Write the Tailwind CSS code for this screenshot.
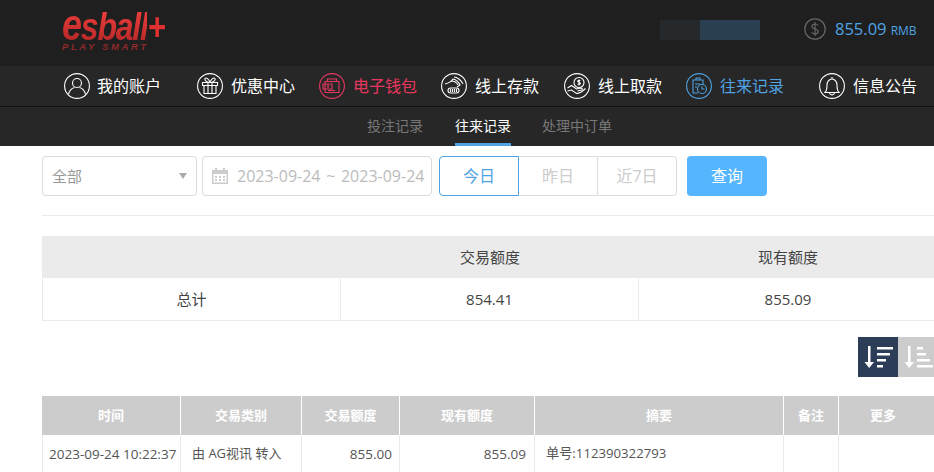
<!DOCTYPE html>
<html lang="en">
<head>
    <meta charset="UTF-8">
    <title>esball+ 往来记录</title>
    <script src="https://cdn.jsdelivr.net/npm/@tailwindcss/browser@4"></script>
</head>
<body class="bg-white h-[472px] w-[934px] overflow-hidden font-['Open_Sans','Noto_Sans_CJK_SC',sans-serif] text-[#555]">
    <!-- top bar -->
    <header class="h-[66px] bg-[#1f1f1f] flex items-start">
        <div class="ml-[62px] mt-[9px] w-[110px] h-[50px] flex flex-col font-['Liberation_Sans',sans-serif] italic font-bold">
            <div class="flex items-baseline h-[32px] leading-[32px] tracking-[-1.5px] scale-x-[0.82] origin-left whitespace-nowrap">
                <span class="text-[44px] bg-linear-to-b from-[#ee3d3d] to-[#b82828] bg-clip-text text-transparent">e</span>
                <span class="text-[39px] bg-linear-to-b from-[#ee3d3d] to-[#b82828] bg-clip-text text-transparent">sball</span>
                <span class="text-[38px] text-[#e03030]">+</span>
            </div>
            <div class="text-[9.500px] leading-[10px] tracking-[2.600px] text-[#8f2a2a] mt-[1px] whitespace-nowrap">PLAY SMART</div>
        </div>
        <div class="ml-[488px] mt-[20px] flex h-[20px] w-[100px]">
            <div class="w-[40px] bg-[#25292c]"></div>
            <div class="w-[60px] bg-[#2a3f52]"></div>
        </div>
        <svg class="ml-[44px] mt-[18px]" width="22" height="22" viewBox="0 0 22 22" fill="none" stroke="#666" stroke-width="1.2">
            <circle cx="11" cy="11" r="10.200"/>
            <path d="M14 7.500c-.6-1-1.700-1.500-3-1.500-1.700 0-3 .9-3 2.400 0 3.400 6.200 1.800 6.200 5.200 0 1.500-1.400 2.400-3.200 2.400-1.400 0-2.600-.6-3.200-1.700M11 4v14"/>
        </svg>
        <div class="ml-[9px] mt-[17px] h-[24px] leading-[24px] whitespace-nowrap text-[#4fa3e3]">
            <span class="text-[16.500px]">855.09</span>
            <span class="text-[12px]">RMB</span>
        </div>
    </header>

    <!-- main nav -->
    <nav class="h-[41px] bg-[#272727] border-b border-[#111] flex items-center pl-[64px] gap-[24px] text-[16px] text-white">
        <a class="flex items-center gap-[7px] whitespace-nowrap">
            <svg width="26" height="26" viewBox="0 0 26 26" fill="none" stroke="currentColor" stroke-width="1.100">
                <circle cx="13" cy="13" r="12.400"/>
                <circle cx="13" cy="10" r="4.500"/>
                <path d="M4.500 21.500c1-4.500 4-6.500 6-7M21.500 21.500c-1-4.500-4-6.500-6-7"/>
            </svg>
            <span>我的账户</span>
        </a>
        <a class="ml-[12px] flex items-center gap-[8px] whitespace-nowrap">
            <svg width="26" height="26" viewBox="0 0 26 26" fill="none" stroke="currentColor" stroke-width="1.100">
                <circle cx="13" cy="13" r="12.400"/>
                <path d="M5.500 9.500h15v3h-15zM7 12.500v8h12v-8M11 9.500v11M15 9.500v11M13 9.500c-1-3.500-4-5.500-5-4S10 9.500 13 9.500c3 0 6-2.500 5-4S14 6 13 9.500"/>
            </svg>
            <span>优惠中心</span>
        </a>
        <a class="flex items-center gap-[8px] whitespace-nowrap text-[#e8375f]">
            <svg width="26" height="26" viewBox="0 0 26 26" fill="none" stroke="currentColor" stroke-width="1.100">
                <circle cx="13" cy="13" r="12.400"/>
                <path d="M6 8.500h14v11H6zM8.500 8.500v-2.500h9v2.500M4 11h9v5H4zM9 17.500h7"/>
                <path d="M9 12v3M8 13h2"/>
            </svg>
            <span>电子钱包</span>
        </a>
        <a class="flex items-center gap-[8px] whitespace-nowrap">
            <svg width="26" height="26" viewBox="0 0 26 26" fill="none" stroke="currentColor" stroke-width="1.100">
                <circle cx="13" cy="13" r="12.400"/>
                <path d="M4 11c4-1 6-2 8-5 2 0 6 3 7 6l-3 2M10 8c3 0 6 2 7 4M13 4c3 0 7 3 9 7"/>
                <rect x="7" y="15" width="11" height="5" rx="2.500"/>
                <path d="M9.500 16v3M11.500 16v3M13.500 16v3M15.500 16v3"/>
            </svg>
            <span>线上存款</span>
        </a>
        <a class="ml-[1px] flex items-center gap-[8px] whitespace-nowrap">
            <svg width="26" height="26" viewBox="0 0 26 26" fill="none" stroke="currentColor" stroke-width="1.100">
                <circle cx="13" cy="13" r="12.400"/>
                <circle cx="15" cy="9.500" r="5"/>
                <path d="M15 6.500v6M16.300 7.800c-.8-.8-2.600-.6-2.600.5s2.700.8 2.700 2-1.900 1.400-2.800.5"/>
                <path d="M3.500 15l4-2.500 5 3.500 5-1c1 0 1 1.500 0 2l-4 1M3.500 18l4-1 5 3.500c2 0 6-2 9-5"/>
            </svg>
            <span>线上取款</span>
        </a>
        <a class="flex items-center gap-[8px] whitespace-nowrap text-[#4fa3e3]">
            <svg width="26" height="26" viewBox="0 0 26 26" fill="none" stroke="currentColor" stroke-width="1.100">
                <circle cx="13" cy="13" r="12.400"/>
                <path d="M12 20H7V7h3V5h4v2h3v4M10 7h4M9 11h5M9 14h2"/>
                <circle cx="16" cy="16" r="4.500"/>
                <path d="M16 13.500V16h2.500"/>
            </svg>
            <span>往来记录</span>
        </a>
        <a class="ml-[11px] flex items-center gap-[8px] whitespace-nowrap">
            <svg width="26" height="26" viewBox="0 0 26 26" fill="none" stroke="currentColor" stroke-width="1.100">
                <circle cx="13" cy="13" r="12.400"/>
                <path d="M6 19.500c2-2 2-4 2-7.500 0-3 2-6 5-6s5 3 5 6c0 3.500 0 5.500 2 7.500zM13 4v2M10.500 20c.5 2.500 4.500 2.500 5 0"/>
            </svg>
            <span>信息公告</span>
        </a>
    </nav>

    <!-- sub nav -->
    <div class="h-[39px] bg-[#272727] flex pl-[367px] gap-[32px] text-[14px] text-[#777]">
        <a class="h-[39px] leading-[38px]">投注记录</a>
        <a class="h-[39px] leading-[38px] text-white border-b-[3px] border-[#4fa3e3]">往来记录</a>
        <a class="h-[39px] leading-[38px] -ml-[1px]">处理中订单</a>
    </div>

    <main class="pl-[42px]">
        <!-- filters -->
        <div class="pt-[10px] pb-[19px] border-b border-[#ebebeb] flex items-start text-[16px] text-[#bbb]">
            <div class="w-[155px] h-[40px] border border-[#dcdcdc] rounded-[4px] flex items-center justify-between pl-[9px] pr-[9px] text-[#999] text-[15px]">
                <span>全部</span>
                <span class="w-0 h-0 border-x-[4px] border-x-transparent border-t-[6px] border-t-[#aaa]"></span>
            </div>
            <div class="ml-[5px] w-[230px] h-[40px] border border-[#dcdcdc] rounded-[4px] flex items-center pl-[9px] whitespace-nowrap">
                <svg width="16" height="16" viewBox="0 0 16 16" fill="#ccc">
                    <path d="M0 2h3V0h2v2h6V0h2v2h3v14H0zM1.500 6v8.500h13V6z"/>
                    <path d="M3 8h2v2H3zM7 8h2v2H7zM11 8h2v2h-2zM3 11h2v2H3zM7 11h2v2H7zM11 11h2v2h-2z"/>
                </svg>
                <span class="ml-[9px]">2023-09-24 <span class="mx-[1.500px]">~</span> 2023-09-24</span>
            </div>
            <div class="ml-[7px] w-[238px] h-[40px] flex text-[16px] text-[#ccc]">
                <button class="w-[80px] border border-[#4fa3e3] rounded-l-[4px] text-[#4fa3e3]">今日</button>
                <button class="w-[78px] border-y border-[#dcdcdc]">昨日</button>
                <button class="w-[80px] border border-[#dcdcdc] rounded-r-[4px]">近7日</button>
            </div>
            <button class="ml-[10px] w-[80px] h-[40px] rounded-[4px] bg-[#55b5ff] text-white text-[16px]">查询</button>
        </div>

        <!-- totals -->
        <table class="mt-[20px] w-[895px] table-fixed border-separate border-spacing-0 text-[15px] text-[#444] text-center">
            <thead>
                <tr class="h-[42px] bg-[#ebebeb]">
                    <th class="w-[299px] font-normal"></th>
                    <th class="w-[298px] font-normal">交易额度</th>
                    <th class="font-normal">现有额度</th>
                </tr>
            </thead>
            <tbody>
                <tr class="h-[43px]">
                    <td class="border-l border-r border-b border-[#ebebeb]">总计</td>
                    <td class="border-r border-b border-[#ebebeb]">854.41</td>
                    <td class="border-b border-[#ebebeb]">855.09</td>
                </tr>
            </tbody>
        </table>

        <!-- sort buttons -->
        <div class="mt-[16px] flex justify-end">
            <button class="w-[40px] h-[40px] bg-[#2c3e57] flex items-center justify-center">
                <svg width="30" height="24" viewBox="0 0 30 24" fill="white">
                    <path d="M5 1h2.500v16H11l-4.800 6L1.500 17H5z"/>
                    <path d="M14 2h16v2.500H14zM14 8h13v2.500H14zM14 14h9v2.500h-9zM14 20h6v2.500h-6z"/>
                </svg>
            </button>
            <button class="w-[36px] h-[40px] bg-[#ccc] flex items-center justify-start pl-[5px]">
                <svg width="30" height="24" viewBox="0 0 30 24" fill="white">
                    <path d="M5 1h2.500v16H11l-4.800 6L1.500 17H5z"/>
                    <path d="M14 2h6v2.500h-6zM14 8h9v2.500h-9zM14 14h13v2.500H14zM14 20h16v2.500H14z"/>
                </svg>
            </button>
        </div>

        <!-- records -->
        <table class="mt-[19px] w-[892px] table-fixed border-separate border-spacing-0 text-[13.500px] text-[#555]">
            <thead class="text-white text-[13px]">
                <tr class="h-[39px] bg-[#ccc]">
                    <th class="w-[139px] font-bold border-r border-white">时间</th>
                    <th class="w-[121px] font-bold border-r border-white">交易类别</th>
                    <th class="w-[98px] font-bold border-r border-white">交易额度</th>
                    <th class="w-[135px] font-bold border-r border-white">现有额度</th>
                    <th class="w-[249px] font-bold border-r border-white">摘要</th>
                    <th class="w-[55px] font-bold border-r border-white">备注</th>
                    <th class="font-bold pr-[7px]">更多</th>
                </tr>
            </thead>
            <tbody>
                <tr class="h-[39px]">
                    <td class="border-l border-r border-b border-[#ebebeb] pl-[6px] whitespace-nowrap">2023-09-24 10:22:37</td>
                    <td class="border-r border-b border-[#ebebeb] pl-[11px] text-[13px]">由 AG视讯 转入</td>
                    <td class="border-r border-b border-[#ebebeb] text-right pr-[7px]">855.00</td>
                    <td class="border-r border-b border-[#ebebeb] text-right pr-[8px]">855.09</td>
                    <td class="border-r border-b border-[#ebebeb] pl-[11px] text-[13.200px]">单号:112390322793</td>
                    <td class="border-r border-b border-[#ebebeb]"></td>
                    <td class="border-b border-[#ebebeb]"></td>
                </tr>
            </tbody>
        </table>
    </main>
</body>
</html>
